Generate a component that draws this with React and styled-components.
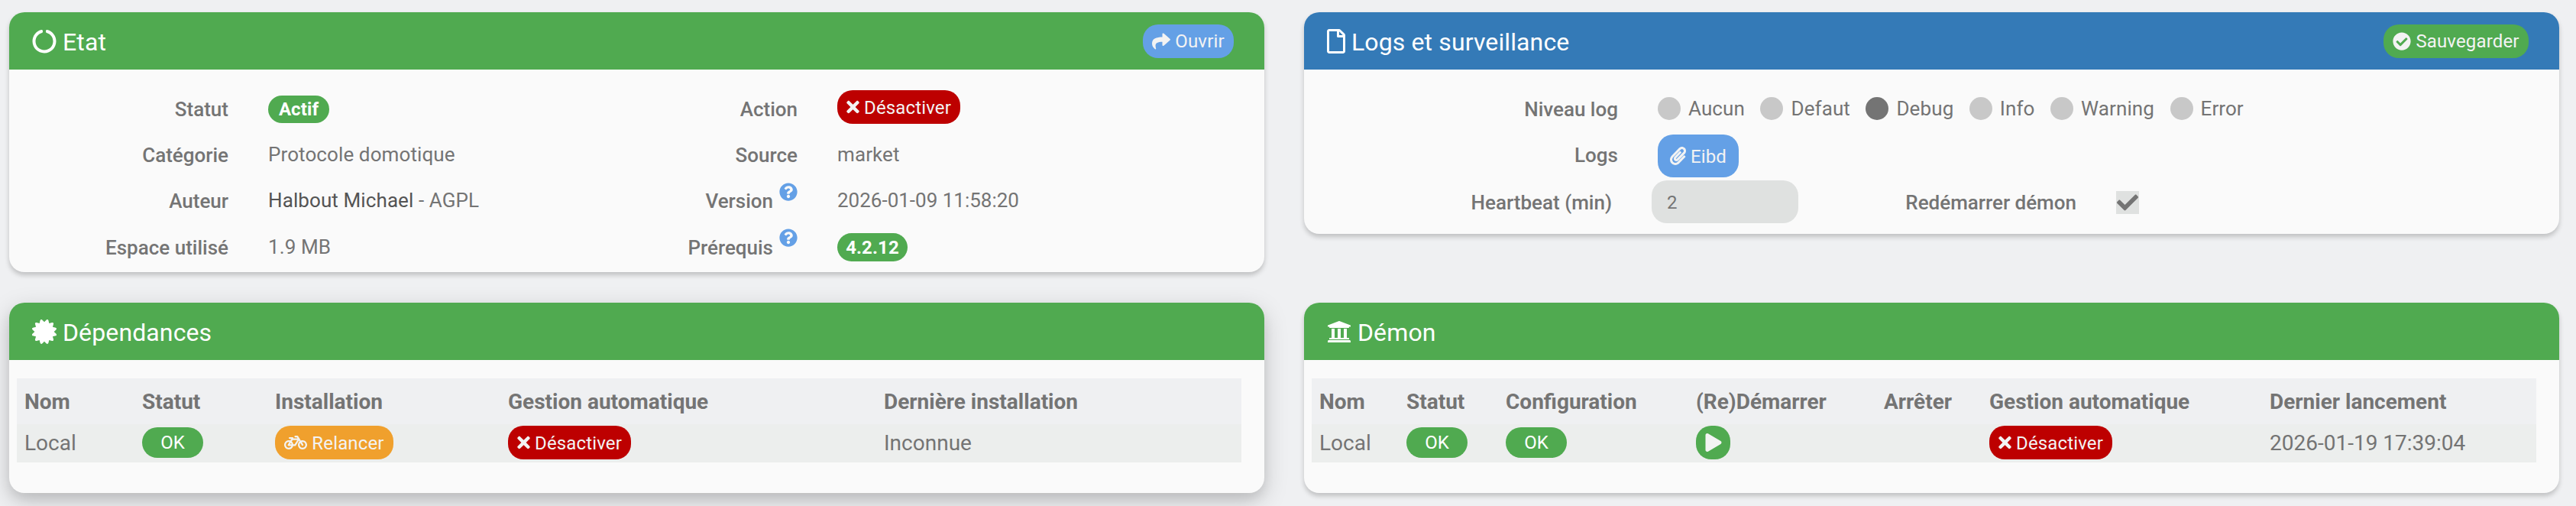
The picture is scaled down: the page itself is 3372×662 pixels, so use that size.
import React from "react";
import styled, { createGlobalStyle, css } from "styled-components";
import {
  FaCircleNotch,
  FaRegFile,
  FaCertificate,
  FaUniversity,
  FaShare,
  FaTimes,
  FaCheckCircle,
  FaPaperclip,
  FaBicycle,
  FaPlay,
  FaQuestionCircle,
  FaCheck,
} from "react-icons/fa";

const GREEN = "#50aa50";
const BLUE = "#347ab7";
const SKY = "#64a0e6";
const RED = "#bd0000";
const ORANGE = "#f0a02d";

const GlobalStyle = createGlobalStyle`
  * { box-sizing: border-box; }
  body {
    margin: 0;
    height: 662px;
    overflow: hidden;
    background: #eff0f2;
    color: #747474;
    font-family: Roboto, sans-serif;
    font-size: 26px;
    line-height: 36px;
  }
`;

const Page = styled.main`
  display: grid;
  grid-template-columns: 1643px 1643px;
  column-gap: 52px;
  grid-template-rows: 340px 249px;
  row-gap: 40px;
  align-items: start;
  padding: 16px 0 0 12px;
`;

const Panel = styled.section`
  height: ${(p) => p.$h}px;
  border-radius: 20px;
  overflow: hidden;
  background: #fafafa;
  box-shadow: ${(p) =>
    p.$raised
      ? "0 10px 32px rgba(0,0,0,.18), 0 8px 14px rgba(0,0,0,.08)"
      : "0 4px 6px rgba(0,0,0,.2)"};
`;

const PanelHeader = styled.header`
  display: flex;
  align-items: center;
  justify-content: space-between;
  height: 75px;
  padding: 0 40px 0 30px;
  background: ${(p) => p.$bg};
  color: #fff;
`;

const Title = styled.h3`
  display: flex;
  align-items: center;
  gap: 8px;
  margin: 0;
  font-size: 32px;
  font-weight: 400;
  letter-spacing: 0.12px;
`;

const TitleText = styled.span`
  padding-top: 3px;
`;

const Button = styled.button`
  display: inline-flex;
  align-items: center;
  justify-content: center;
  gap: 6px;
  width: ${(p) => p.$w}px;
  height: ${(p) => p.$h || 44}px;
  padding: 0;
  border: 0;
  border-radius: 20px;
  background: ${(p) => p.$bg};
  color: #f3f3f3;
  font: 400 24px/34px Roboto, sans-serif;
  letter-spacing: 0.15px;
  white-space: nowrap;
`;

const ButtonText = styled.span`
  padding-top: 1px;
`;

const Badge = styled.span`
  display: inline-flex;
  align-items: center;
  justify-content: center;
  width: ${(p) => p.$w}px;
  height: ${(p) => p.$h}px;
  border-radius: 20px;
  background: ${GREEN};
  color: #fff;
  font-size: 24px;
  font-weight: ${(p) => p.$weight || 400};
`;

const Form = styled.div`
  display: grid;
  grid-template-columns: ${(p) => p.$cols};
  grid-auto-rows: 60px;
  padding-top: 21px;
`;

const Label = styled.label`
  display: flex;
  align-items: center;
  justify-content: flex-end;
  gap: 8px;
  padding-right: ${(p) => p.$pr || 0}px;
  padding-top: ${(p) => p.$pt || 2}px;
  font-weight: 500;
  white-space: nowrap;
`;

const Help = styled(FaQuestionCircle)`
  width: 24px;
  height: 24px;
  margin-bottom: 25px;
  color: ${SKY};
`;

const Value = styled.div`
  display: flex;
  align-items: center;
  white-space: pre;
  padding-left: ${(p) => p.$pl || 52}px;
  padding-top: ${(p) => p.$pt || 0}px;
  padding-bottom: ${(p) => p.$pb || 0}px;
  letter-spacing: ${(p) => (p.$digits ? 0 : 0.1)}px;
`;

const Author = styled.a`
  color: #545454;
`;

const RadioGroup = styled.div`
  display: flex;
  gap: 20.5px;
`;

const Radio = styled.span`
  display: flex;
  align-items: center;
  gap: 10px;
  &::before {
    content: "";
    width: 30px;
    height: 30px;
    border-radius: 50%;
    background: ${(p) => (p.$on ? "#747474" : "#c8c8c8")};
  }
`;

const Heartbeat = styled.div`
  display: flex;
  align-items: center;
  height: 56px;
  width: 192px;
  padding: 1px 0 0 20px;
  border-radius: 20px;
  background: #dfe1e0;
  font-size: 24px;
`;

const CheckBox = styled.span`
  display: flex;
  align-items: center;
  justify-content: center;
  width: 30px;
  height: 30px;
  background: #dfe1e0;
`;

const Table = styled.div`
  margin: 24px 30px 0 10px;
  font-size: 28px;
`;

const Row = styled.div`
  display: grid;
  grid-template-columns: ${(p) => p.$cols};
  align-items: center;
  padding-left: 10px;
  ${(p) =>
    p.$head
      ? css`
          height: 60px;
          padding-top: 1px;
          background: #eff0f2;
          font-weight: 700;
        `
      : css`
          height: 50px;
          background: #eceeed;
        `}
`;

const Cell = styled.div`
  display: flex;
  align-items: center;
  padding-bottom: ${(p) => (p.$control ? 2 : 0)}px;
  white-space: nowrap;
`;

const DEP_COLS = "154px 174px 305px 492px 1fr";
const DAEMON_COLS = "114px 130px 249px 246px 138px 367px 1fr";

function Disable() {
  return (
    <Button $bg={RED} $w={161}>
      <FaTimes size={24} style={{ width: 17 }} />
      <ButtonText>Désactiver</ButtonText>
    </Button>
  );
}

function State() {
  return (
    <Panel $h={340}>
      <PanelHeader $bg={GREEN}>
        <Title><FaCircleNotch size={32} /><TitleText>Etat</TitleText></Title>
        <Button $bg={SKY} $w={119}><FaShare size={24} /><ButtonText>Ouvrir</ButtonText></Button>
      </PanelHeader>
      <Form $cols="287px 458px 287px 1fr">
        <Label>Statut</Label>
        <Value $pt={2}><Badge $w={80} $h={36} $weight={700}>Actif</Badge></Value>
        <Label>Action</Label>
        <Value $pb={4}><Disable /></Value>
        <Label>Catégorie</Label>
        <Value>Protocole domotique</Value>
        <Label>Source</Label>
        <Value>market</Value>
        <Label>Auteur</Label>
        <Value><Author>Halbout Michael</Author> - AGPL</Value>
        <Label>Version<Help /></Label>
        <Value $digits>2026-01-09 11:58:20</Value>
        <Label $pt={3}>Espace utilisé</Label>
        <Value $pt={1}>1.9 MB</Value>
        <Label $pt={3}>Prérequis<Help /></Label>
        <Value $pt={3}><Badge $w={92} $h={37} $weight={700}>4.2.12</Badge></Value>
      </Form>
    </Panel>
  );
}

function Logs() {
  return (
    <Panel $h={290}>
      <PanelHeader $bg={BLUE}>
        <Title>
          <FaRegFile size={32} style={{ width: 24 }} />
          <TitleText>Logs et surveillance</TitleText>
        </Title>
        <Button $bg={GREEN} $w={190}>
          <FaCheckCircle size={24} /><ButtonText>Sauvegarder</ButtonText>
        </Button>
      </PanelHeader>
      <Form $cols="411px 409px 191px 1fr">
        <Label>Niveau log</Label>
        <Value>
          <RadioGroup>
            {["Aucun", "Defaut", "Debug", "Info", "Warning", "Error"].map((name) => (
              <Radio key={name} $on={name === "Debug"}>{name}</Radio>
            ))}
          </RadioGroup>
        </Value>
        <span /><span />
        <Label>Logs</Label>
        <Value $pt={4}>
          <Button $bg={SKY} $w={106} $h={56}>
            <FaPaperclip size={24} style={{ width: 21 }} /><ButtonText>Eibd</ButtonText>
          </Button>
        </Value>
        <span /><span />
        <Label $pr={8} $pt={5}>Heartbeat (min)</Label>
        <Value $pl={44} $pt={4}><Heartbeat>2</Heartbeat></Value>
        <Label $pt={5}>Redémarrer démon</Label>
        <Value $pt={6}><CheckBox><FaCheck size={28} /></CheckBox></Value>
      </Form>
    </Panel>
  );
}

function Dependencies() {
  return (
    <Panel $h={249} $raised>
      <PanelHeader $bg={GREEN}>
        <Title><FaCertificate size={32} /><TitleText>Dépendances</TitleText></Title>
      </PanelHeader>
      <Table>
        <Row $cols={DEP_COLS} $head>
          <Cell>Nom</Cell><Cell>Statut</Cell><Cell>Installation</Cell>
          <Cell>Gestion automatique</Cell><Cell>Dernière installation</Cell>
        </Row>
        <Row $cols={DEP_COLS}>
          <Cell>Local</Cell>
          <Cell $control><Badge $w={80} $h={40}>OK</Badge></Cell>
          <Cell $control>
            <Button $bg={ORANGE} $w={155}><FaBicycle size={30} /><ButtonText>Relancer</ButtonText></Button>
          </Cell>
          <Cell $control><Disable /></Cell>
          <Cell>Inconnue</Cell>
        </Row>
      </Table>
    </Panel>
  );
}

function Daemon() {
  return (
    <Panel $h={249}>
      <PanelHeader $bg={GREEN}>
        <Title><FaUniversity size={32} /><TitleText>Démon</TitleText></Title>
      </PanelHeader>
      <Table>
        <Row $cols={DAEMON_COLS} $head>
          <Cell>Nom</Cell><Cell>Statut</Cell><Cell>Configuration</Cell><Cell>(Re)Démarrer</Cell>
          <Cell>Arrêter</Cell><Cell>Gestion automatique</Cell><Cell>Dernier lancement</Cell>
        </Row>
        <Row $cols={DAEMON_COLS}>
          <Cell>Local</Cell>
          <Cell $control><Badge $w={80} $h={40}>OK</Badge></Cell>
          <Cell $control><Badge $w={80} $h={40}>OK</Badge></Cell>
          <Cell $control><Button $bg={GREEN} $w={45}><FaPlay size={24} /></Button></Cell>
          <Cell />
          <Cell $control><Disable /></Cell>
          <Cell>2026-01-19 17:39:04</Cell>
        </Row>
      </Table>
    </Panel>
  );
}

export default function App() {
  return (
    <>
      <GlobalStyle />
      <Page>
        <State />
        <Logs />
        <Dependencies />
        <Daemon />
      </Page>
    </>
  );
}
